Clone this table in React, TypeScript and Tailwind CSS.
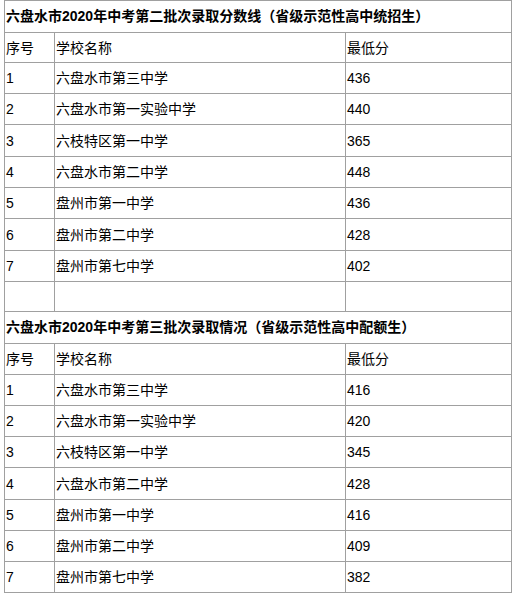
const first = [
  { no: "1", name: "六盘水市第三中学", score: "436", h: "h-[31px]" },
  { no: "2", name: "六盘水市第一实验中学", score: "440", h: "h-[31px]" },
  { no: "3", name: "六枝特区第一中学", score: "365", h: "h-[32px]" },
  { no: "4", name: "六盘水市第二中学", score: "448", h: "h-[31px]" },
  { no: "5", name: "盘州市第一中学", score: "436", h: "h-[31px]" },
  { no: "6", name: "盘州市第二中学", score: "428", h: "h-[32px]" },
  { no: "7", name: "盘州市第七中学", score: "402", h: "h-[31px]" },
];

const second = [
  { no: "1", name: "六盘水市第三中学", score: "416", h: "h-[31px]" },
  { no: "2", name: "六盘水市第一实验中学", score: "420", h: "h-[31px]" },
  { no: "3", name: "六枝特区第一中学", score: "345", h: "h-[31px]" },
  { no: "4", name: "六盘水市第二中学", score: "428", h: "h-[32px]" },
  { no: "5", name: "盘州市第一中学", score: "416", h: "h-[31px]" },
  { no: "6", name: "盘州市第二中学", score: "409", h: "h-[31px]" },
  { no: "7", name: "盘州市第七中学", score: "382", h: "h-[31px]" },
];

function Row({ no, name, score, h }: { no: string; name: string; score: string; h: string }) {
  return (
    <div className={`grid grid-cols-[50px_291px_1fr] border-b border-[#a0a0a0] ${h}`}>
      <div className="flex items-center border-r border-[#a0a0a0] pl-px pt-px">{no}</div>
      <div className="flex items-center border-r border-[#a0a0a0] pl-px pt-px">{name}</div>
      <div className="flex items-center pl-px pt-px">{score}</div>
    </div>
  );
}

function Title({ text }: { text: string }) {
  return (
    <div className="flex h-[32px] items-center border-b border-[#a0a0a0] pl-px text-[14px] font-bold">
      {text}
    </div>
  );
}

export default function App() {
  return (
    <div lang="zh-CN" className="h-[596px] w-[515px] bg-white pl-1">
      <div
        className="w-[508px] border-l border-r border-t border-[#a0a0a0] text-[14px] text-black"
        style={{ fontFamily: '"Liberation Sans", "Noto Sans CJK SC", sans-serif' }}
      >
        <Title text="六盘水市2020年中考第二批次录取分数线（省级示范性高中统招生）" />
        <Row no="序号" name="学校名称" score="最低分" h="h-[30px]" />
        {first.map((r) => (
          <Row key={"a" + r.no} {...r} />
        ))}
        <Row no="" name="" score="" h="h-[30px]" />
        <Title text="六盘水市2020年中考第三批次录取情况（省级示范性高中配额生）" />
        <Row no="序号" name="学校名称" score="最低分" h="h-[31px]" />
        {second.map((r) => (
          <Row key={"b" + r.no} {...r} />
        ))}
      </div>
    </div>
  );
}
